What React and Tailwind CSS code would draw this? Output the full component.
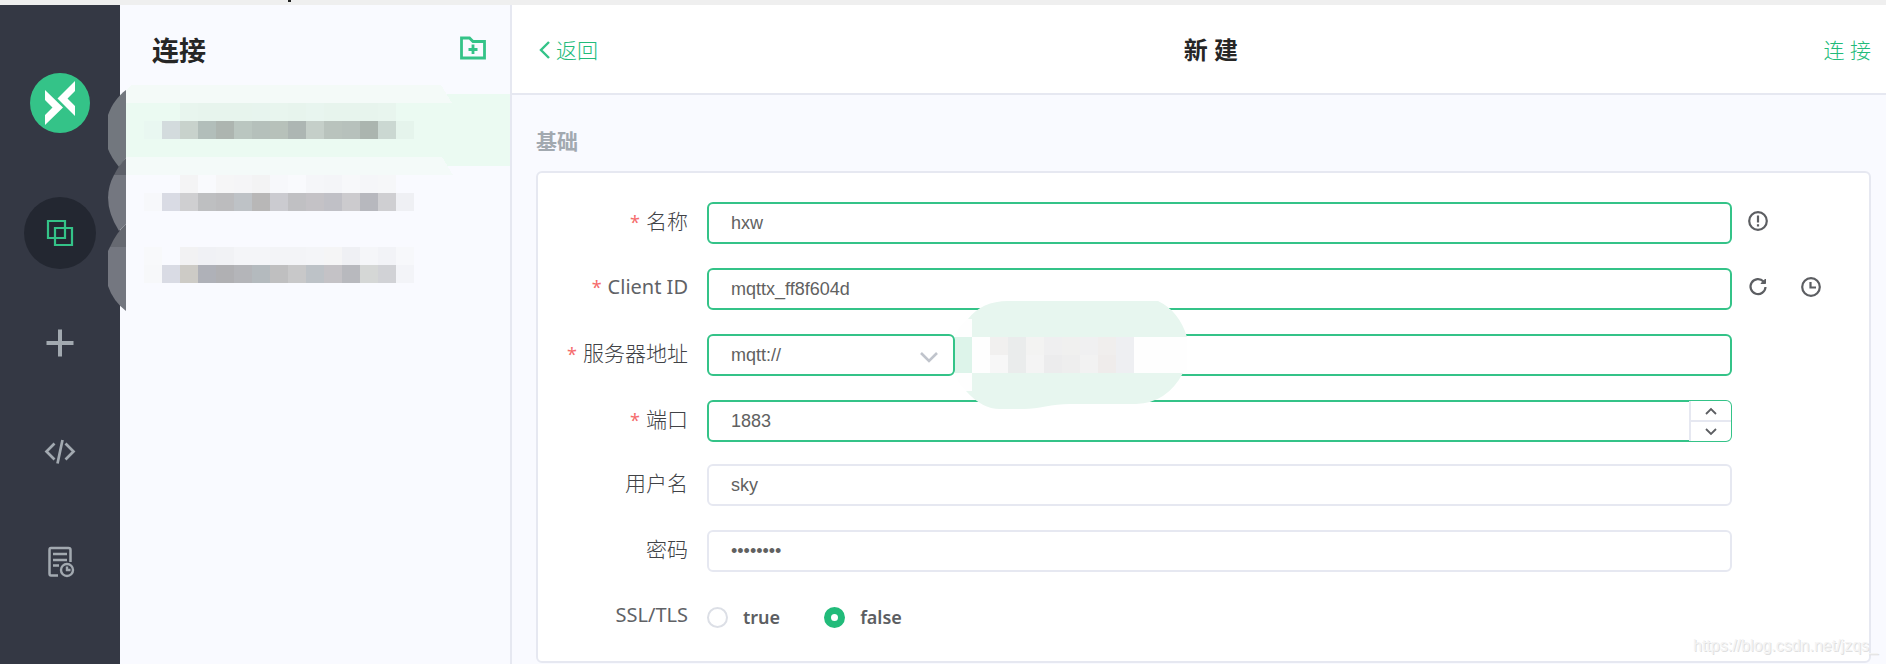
import { useState } from 'react';

const inputBase =
  'h-[42px] w-full rounded-md border-2 bg-white px-[22px] font-["Liberation_Sans",Arial,sans-serif] text-lg text-[#616161] outline-none';
const filled = 'border-[#34c388]';
const plain = 'border-[#e6e8f1]';

const CELL = 18;

// censored connection names, one row of cells per connection
const maskedNames = [
  {
    top: 18,
    soft: ['', '', '#e8f5ee', '#e7f4ed', '#e7f4ed', '#e7f4ed', '#e7f4ee', '#e8f5ee', '#e7f4ed', '#e8f5ef', '#e7f4ed', '#e7f4ed', '#e7f4ed', '#e8f5ee', ''],
    cells: ['#e9f7f1', '#d3dbdd', '#c8d2cc', '#b2beba', '#adb5b0', '#bac6c0', '#b5c0bb', '#b7c1ba', '#adb6b3', '#c5cfc9', '#b9c3bd', '#b7c1bc', '#abb5af', '#cbd8d2', '#e5f4ec'],
  },
  {
    top: 90,
    soft: ['', '', '#f4f4f5', '#f9fafd', '#f6f6f7', '#f5f5f7', '#f3f3f4', '#f7f8fb', '#f9fafd', '#f5f6f9', '#f4f5f8', '#f7f8fa', '#f5f6f9', '#f6f7f9', ''],
    cells: ['#f7f8fb', '#d9dbe4', '#cfcfd1', '#bebfc1', '#bcbcbe', '#bec2c6', '#b8b7b7', '#cbcbd0', '#c0c0c3', '#c4c2c6', '#c0c0c6', '#cccbce', '#b7b8be', '#cfcfd2', '#eff0f4'],
  },
  {
    top: 162,
    soft: ['#f8f9fb', '', '#f2f2f3', '#f0f1f5', '#f1f2f5', '#f4f5f8', '#f4f5f8', '#f3f4f7', '#f3f4f7', '#f4f5f8', '#f5f5f6', '#eff0f4', '#f5f6f9', '#f2f3f7', '#f7f8fb'],
    cells: ['#f7f8fa', '#d9dbe4', '#cdcbc6', '#afb1b8', '#b0b0b3', '#b4b5b9', '#b4babe', '#bfbfc0', '#c8c8c9', '#bdc2c7', '#c4c2c6', '#b8b9be', '#d5d7d6', '#d1d2d6', '#f3f4f8'],
  },
];

const maskedHost = [
  ['#f1f0ef', '#eaecec', '#f3f3f2', '#efeff0', '#f0f0ef', '#f0f0f1', '#f0eeed', '#eeeff2'],
  ['#f7f7f7', '#eaecec', '#f4f4f4', '#ececed', '#eeeeee', '#f2f2f2', '#efeceb', '#eeeff2'],
];

function NameMask() {
  return (
    <svg
      className="pointer-events-none absolute -left-3 -top-[9px] z-10"
      width="360"
      height="240"
      viewBox="0 0 360 240"
      shapeRendering="crispEdges"
      aria-hidden="true"
    >
      <g shapeRendering="auto">
        <path d="M18 5C10 11 4 19 0 30V64Q3 72 11 82L18 73Z" fill="#72777e" />
        <path d="M18 73Q11 80 6 90H18Z" fill="#5d6069" />
        <path d="M6 90H18V139L11 146Q-8 116 6 90Z" fill="#747780" />
        <path d="M18 139Q8 148 2 162H18Z" fill="#666971" />
        <path d="M2 162H18V226Q5 216 0 201V166Z" fill="#747780" />
      </g>
      <path d="M18 5L24 0H333L344 18H18Z" fill="#f4faf8" />
      <path d="M18 72H334L345 90H18Z" fill="#f4faf9" />
      {maskedNames.map((row) => (
        <g key={row.top}>
          {row.soft.map((c, i) => c && <rect key={i} x={36 + i * CELL} y={row.top} width={CELL} height={CELL} fill={c} />)}
          {row.cells.map((c, i) => (
            <rect key={i} x={36 + i * CELL} y={row.top + CELL} width={CELL} height={CELL} fill={c} />
          ))}
        </g>
      ))}
    </svg>
  );
}

function HostMask() {
  return (
    <svg
      className="pointer-events-none absolute -left-px -top-[33px] z-10"
      width="234"
      height="109"
      viewBox="0 0 234 109"
      aria-hidden="true"
    >
      <path d="M1 36Q4 26 13 18H18V36H233V72H18V90H12Q4 83 1 72Z" fill="#fefefe" />
      <path d="M1 33H18V76H1Z" fill="#fefefe" />
      <path d="M1 36H18V72H1Z" fill="#ddf4ea" />
      <path d="M14 18Q28 0 54 0H204Q225 10 233 36H18V18Z" fill="#e7f6ef" />
      <path d="M18 72H229Q213 102 182 103H116C98 103 84 108 70 108H46Q28 108 12 90H18Z" fill="#e7f6ef" />
      {maskedHost.map((row, y) =>
        row.map((c, x) => (
          <rect key={`${x}-${y}`} x={36 + x * CELL} y={36 + y * CELL} width={CELL} height={CELL} fill={c} shapeRendering="crispEdges" />
        ))
      )}
    </svg>
  );
}

function Logo() {
  return (
    <svg width="60" height="60" viewBox="0 0 60 60" aria-hidden="true">
      <circle cx="30" cy="30" r="30" fill="#34c388" />
      <path d="M15 17L33 34.500L15 52V42L22.500 34.500L15 27Z" fill="#fff" />
      <path d="M45 8V18L37.500 25.500L45 33V43L27.500 25.500Z" fill="#fff" />
    </svg>
  );
}

const navItems = [
  {
    label: '连接',
    active: true,
    icon: <path d="M6 6H23V23H6ZM13 13H30V30H13Z" strokeWidth="2.200" />,
  },
  { label: '新建', icon: <path d="M18 4.500V31.500M4.500 18H31.500" strokeWidth="4" /> },
  {
    label: '脚本',
    icon: <path d="M12.500 8.500L4.500 16.500L12.500 24.500M23.500 8.500L31.500 16.500L23.500 24.500M20.500 5L15.500 28.500" strokeWidth="2.700" />,
  },
  {
    label: '日志',
    icon: (
      <>
        <path
          d="M28.500 17V5Q28.500 3 26.500 3H9Q7.500 3 7.500 5V28.500Q7.500 30.500 9 30.500H16M11 9H25M11 15H25M11 20.500H17"
          strokeWidth="2.500"
        />
        <circle cx="25" cy="25" r="6" strokeWidth="2.400" />
        <path d="M25 21.500V25H28.500" strokeWidth="2.400" />
      </>
    ),
  },
];

function Field({ id, label, required, latin, children, extra }) {
  return (
    <div className="flex items-center">
      <label
        htmlFor={id}
        className={`w-[150px] shrink-0 pb-1 text-right leading-8 ${
          latin ? 'text-xl text-[#606266]' : 'text-[21px] font-light text-[#404246]'
        }`}
      >
        {required && <span className="mr-1.5 text-lg font-normal text-[#f56c6c]">*</span>}
        {label}
      </label>
      <div className="ml-[19px] flex min-w-0 flex-1">{children}</div>
      <div className="flex w-[137px] shrink-0 gap-[33px] pb-1 pl-4 text-[#5c5e62]">{extra}</div>
    </div>
  );
}

function IconButton({ label, children }) {
  return (
    <button type="button" aria-label={label}>
      <svg width="20" height="20" viewBox="0 0 20 20" fill="none" stroke="currentColor" strokeWidth="2.200">
        {children}
      </svg>
    </button>
  );
}

function Radio({ value, current, onChange }) {
  return (
    <label className="flex items-center gap-[15px] text-lg font-semibold leading-6 text-[#5c5e62]">
      <input
        type="radio"
        name="ssl"
        checked={current === value}
        onChange={() => onChange(value)}
        className="size-[21px] appearance-none rounded-full border-2 border-[#dcdfe6] bg-white checked:border-[7px] checked:border-[#22bb7a]"
      />
      {value}
    </label>
  );
}

export default function App() {
  const [ssl, setSsl] = useState('false');

  return (
    <div className="flex min-h-screen flex-col bg-[#f9faff] font-['Noto_Sans','Noto_Sans_CJK_SC',sans-serif]">
      <div className="h-[5px] bg-[#efefef] pl-72">
        <div className="h-0.5 w-[3px] bg-[#222]" />
      </div>

      <div className="flex flex-1">
        <nav className="flex w-[120px] shrink-0 flex-col items-center bg-[#343844] pt-[68px]">
          <Logo />
          <ul className="mt-16 flex flex-col gap-[38px]">
            {navItems.map((item) => (
              <li key={item.label}>
                <button
                  type="button"
                  aria-label={item.label}
                  className={`flex size-[72px] items-center justify-center rounded-full ${
                    item.active ? 'bg-[#232731] text-[#34c388]' : 'text-[#a2a9b0]'
                  }`}
                >
                  <svg width="36" height="36" viewBox="0 0 36 36" fill="none" stroke="currentColor">
                    {item.icon}
                  </svg>
                </button>
              </li>
            ))}
          </ul>
        </nav>

        <aside className="w-[392px] shrink-0 border-r-2 border-[#e6e8f1]">
          <div className="flex h-[89px] items-center justify-between pl-8 pr-[23px] pt-0.5">
            <h2 className="text-[27px] font-bold leading-9 text-[#262626]">连接</h2>
            <button type="button" aria-label="新建分组" className="pb-1.5 text-[#34c388]">
              <svg width="28" height="28" viewBox="0 0 28 28" fill="none" stroke="currentColor" strokeWidth="2.800">
                <path d="M2.500 4H10.500L14 7.500H25.500V24H2.500Z" />
                <path d="M14 10.500V20M9.500 15.500H18.500" />
              </svg>
            </button>
          </div>
          <ul className="relative">
            <li>
              <button type="button" aria-label="连接 1" className="block h-[72px] w-full bg-[#ebfaf2]" />
            </li>
            <li>
              <button type="button" aria-label="连接 2" className="block h-[72px] w-full" />
            </li>
            <li>
              <button type="button" aria-label="连接 3" className="block h-[72px] w-full" />
            </li>
            <NameMask />
          </ul>
        </aside>

        <main className="relative min-w-0 flex-1">
          <header className="flex h-[90px] items-center justify-between border-b-2 border-[#e6e8f1] bg-white pl-[26px] pr-[15px] pt-0.5">
            <a href="#back" className="flex items-center gap-1.5 text-[21px] font-light leading-8 text-[#22bb7a]">
              <svg width="12" height="20" viewBox="0 0 12 20" fill="none" stroke="#34c388" strokeWidth="2.400">
                <path d="M11 2L3 10L11 18" />
              </svg>
              返回
            </a>
            <h1 className="text-2xl font-bold text-[#262626]">新 建</h1>
            <a href="#connect" className="text-[21px] font-light leading-8 text-[#22bb7a]">
              连 接
            </a>
          </header>

          <form className="pb-px pl-6 pr-[15px] pt-[30px]">
            <h3 className="text-[21px] font-bold leading-8 text-[#a2a9b0]">基础</h3>
            <div className="mt-3.5 rounded-md border-2 border-[#e6e8f1] bg-white pb-[23px] pt-[29px]">
              <div className="flex flex-col gap-6">
                <Field
                  id="name"
                  label="名称"
                  required
                  extra={
                    <IconButton label="提示">
                      <circle cx="10" cy="10" r="8.800" />
                      <path d="M10 4.500V11.500M10 13.200V15.500" />
                    </IconButton>
                  }
                >
                  <input id="name" defaultValue="hxw" className={`${inputBase} ${filled}`} />
                </Field>
                <Field
                  id="client"
                  label="Client ID"
                  required
                  latin
                  extra={
                    <>
                      <IconButton label="刷新">
                        <path d="M15.500 4.500A7.500 7.500 0 1 0 17.500 10" />
                        <path d="M17.500 2V6.500H13Z" fill="currentColor" strokeWidth="1" />
                      </IconButton>
                      <IconButton label="时间">
                        <circle cx="10" cy="10" r="8.800" />
                        <path d="M9.500 5V10.500H15" />
                      </IconButton>
                    </>
                  }
                >
                  <input id="client" defaultValue="mqttx_ff8f604d" className={`${inputBase} ${filled}`} />
                </Field>
                <Field id="protocol" label="服务器地址" required>
                  <div className="relative w-[248px] shrink-0">
                    <select id="protocol" className={`${inputBase} ${filled} appearance-none`}>
                      <option>mqtt://</option>
                      <option>mqtts://</option>
                      <option>ws://</option>
                      <option>wss://</option>
                    </select>
                    <svg
                      className="pointer-events-none absolute right-4 top-4"
                      width="20"
                      height="14"
                      viewBox="0 0 20 14"
                      fill="none"
                      stroke="#c0c4cc"
                      strokeWidth="2.600"
                    >
                      <path d="M2 3L10 11L18 3" />
                    </svg>
                  </div>
                  <div className="relative flex-1">
                    <input aria-label="主机" className={`${inputBase} ${filled}`} />
                    <HostMask />
                  </div>
                </Field>
                <Field id="port" label="端口" required>
                  <div className="relative flex-1">
                    <input
                      id="port"
                      type="number"
                      defaultValue="1883"
                      className={`${inputBase} ${filled} [appearance:textfield] [&::-webkit-inner-spin-button]:appearance-none`}
                    />
                    <div className="absolute inset-y-px right-px flex w-[42px] flex-col overflow-hidden rounded-r-[5px] border-l-2 border-[#e6e8f1] bg-white text-[#5c5e62]">
                      <button type="button" aria-label="增加" className="flex flex-1 items-center justify-center border-b-2 border-[#e6e8f1]">
                        <svg width="12" height="8" viewBox="0 0 12 8" fill="none" stroke="currentColor" strokeWidth="1.800">
                          <path d="M1 7L6 2L11 7" />
                        </svg>
                      </button>
                      <button type="button" aria-label="减少" className="flex flex-1 items-center justify-center">
                        <svg width="12" height="8" viewBox="0 0 12 8" fill="none" stroke="currentColor" strokeWidth="1.800">
                          <path d="M1 1L6 6L11 1" />
                        </svg>
                      </button>
                    </div>
                  </div>
                </Field>
              </div>

              <div className="mt-[22px] flex flex-col gap-6">
                <Field id="user" label="用户名">
                  <input id="user" defaultValue="sky" className={`${inputBase} ${plain}`} />
                </Field>
                <Field id="password" label="密码">
                  <input id="password" type="password" defaultValue="password" className={`${inputBase} ${plain}`} />
                </Field>
                <Field label="SSL/TLS" latin>
                  <div role="radiogroup" aria-label="SSL/TLS" className="flex h-[42px] items-center gap-11">
                    <Radio value="true" current={ssl} onChange={setSsl} />
                    <Radio value="false" current={ssl} onChange={setSsl} />
                  </div>
                </Field>
              </div>
            </div>
          </form>

          <span className="pointer-events-none absolute bottom-1.5 right-2 font-['Liberation_Sans',Arial,sans-serif] text-base leading-6 text-[#f4f4f4] [text-shadow:1px_1px_0_#e0e0e0]">
            https://blog.csdn.net/jzqs_
          </span>
        </main>
      </div>
    </div>
  );
}
